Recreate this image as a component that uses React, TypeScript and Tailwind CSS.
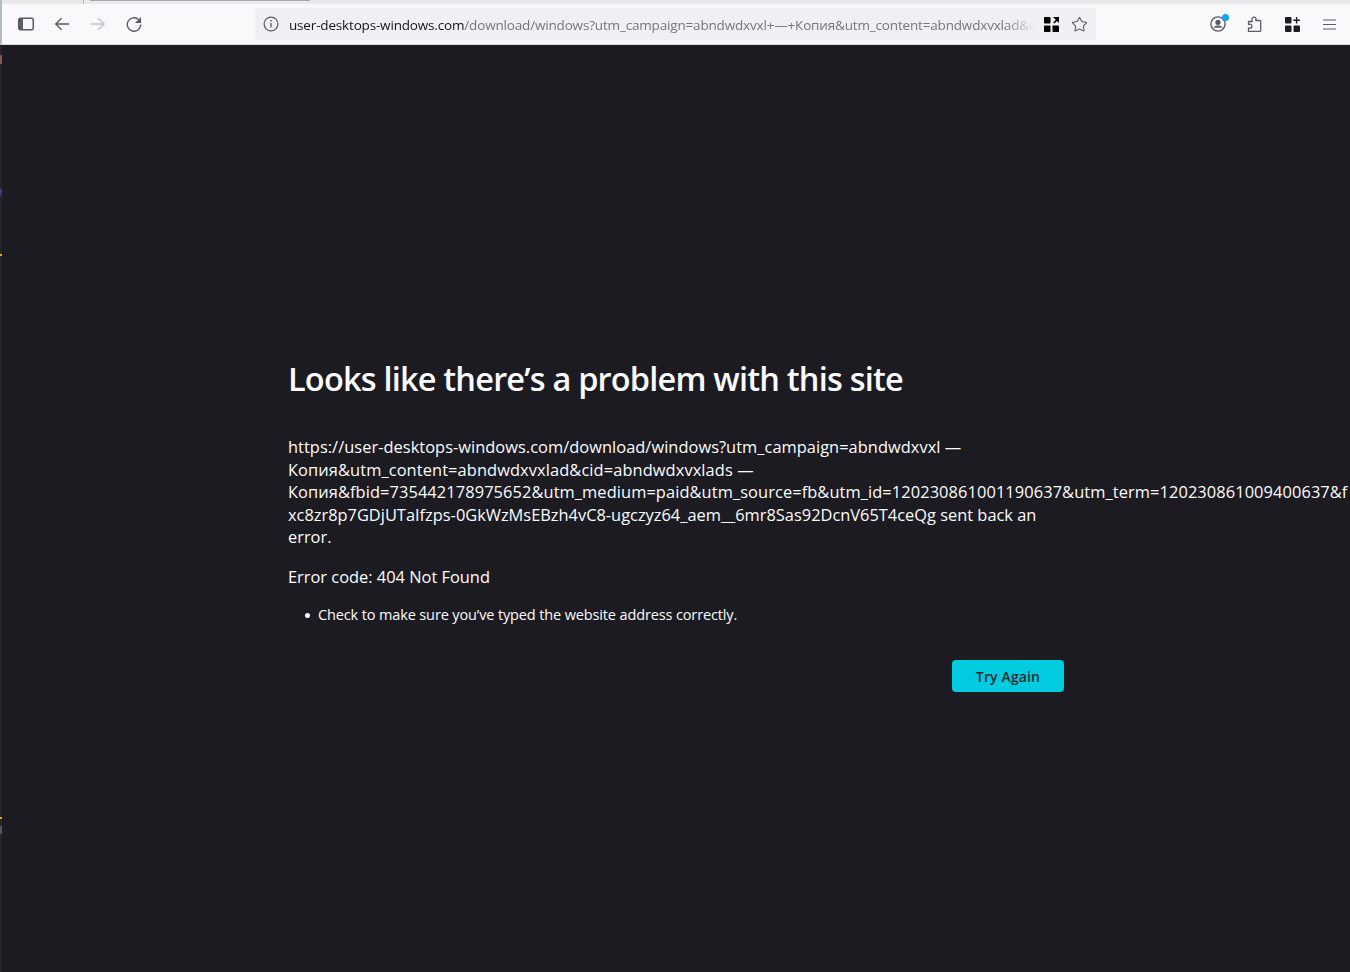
import { Star } from 'lucide-react';

const ICON = '#5b5b66';

function SidebarIcon() {
  return (
    <svg width="16" height="14" viewBox="0 0 16 14" fill="none">
      <rect x="0.75" y="1.25" width="14.5" height="11.5" rx="1.5" stroke={ICON} strokeWidth="1.5" />
      <path d="M1 2h4v10H1z" fill={ICON} />
    </svg>
  );
}

function ArrowIcon({ flip, color }: { flip?: boolean; color: string }) {
  return (
    <svg width="16" height="14" viewBox="0 0 16 14" fill="none" className={flip ? 'rotate-180' : ''}>
      <path d="M15 7H2M7.5 1.2 1.8 7l5.7 5.8" stroke={color} strokeWidth="1.4" />
    </svg>
  );
}

function ReloadIcon() {
  return (
    <svg width="16" height="16" viewBox="0 0 16 16" fill="none">
      <path d="M12.6 3.6A6.7 6.7 0 1 0 14.7 8.4" stroke={ICON} strokeWidth="1.4" />
      <path d="M15 1v6H9z" fill={ICON} />
    </svg>
  );
}

function InfoIcon() {
  return (
    <svg width="16" height="16" viewBox="0 0 16 16" fill="none">
      <circle cx="8" cy="8" r="6.9" stroke={ICON} strokeWidth="1.2" />
      <path d="M8 7v4.6" stroke={ICON} strokeWidth="1.3" />
      <circle cx="8" cy="4.8" r="0.9" fill={ICON} />
    </svg>
  );
}

// four black squares, top right one is an arrow
function AppsArrowIcon() {
  return (
    <svg width="15" height="15" viewBox="0 0 15 15" fill="#000">
      <rect x="0" y="0" width="6.5" height="6.5" rx="0.8" />
      <rect x="0" y="8.5" width="6.5" height="6.5" rx="0.8" />
      <rect x="8.5" y="8.5" width="6.5" height="6.5" rx="0.8" />
      <path d="M9 0h6v6l-2-2-2.6 2.6-1.2-1.2L11.8 2.8z" />
    </svg>
  );
}

function AccountIcon() {
  return (
    <div className="relative w-4 h-4">
      <svg width="16" height="16" viewBox="0 0 16 16" fill="none">
        <circle cx="8" cy="8" r="7.1" stroke={ICON} strokeWidth="1.4" />
        <circle cx="8" cy="6.3" r="2.6" fill={ICON} />
        <path d="M3.4 11.4c1-1.3 2.6-1.9 4.6-1.9s3.6.6 4.6 1.9L8 11.8z" fill={ICON} />
      </svg>
      <div className="absolute -top-[2px] -right-[3px] w-[7px] h-[7px] rounded-full bg-[#0da5f5]" />
    </div>
  );
}

function PuzzleIcon() {
  return (
    <svg width="15" height="16" viewBox="0 0 15 16" fill="none">
      <path
        d="M7 1.2c1.3 0 2 .9 2 1.9 0 .5-.2.9-.2 1.4h3.9c.6 0 1 .4 1 1v9c0 .5-.4.9-1 .9H1.5v-3.5c.5 0 .9.3 1.5.3 1.1 0 1.9-.9 1.9-2s-.8-2-1.9-2c-.6 0-1 .3-1.5.3V5.5h3.7c0-.5-.2-.9-.2-1.4 0-1 .7-2.9 2-2.900z"
        stroke={ICON}
        strokeWidth="1.3"
        strokeLinejoin="round"
      />
    </svg>
  );
}

function AppsPlusIcon() {
  return (
    <svg width="15" height="15" viewBox="0 0 15 15" fill="#1c1b22">
      <rect x="0" y="0" width="6.5" height="6.5" rx="1" />
      <rect x="0" y="8.5" width="6.5" height="6.5" rx="1" />
      <rect x="8.5" y="8.5" width="6.5" height="6.5" rx="1" />
      <path d="M10.9 0h1.4v2.6H15V4h-2.7v2.6h-1.4V4H8.3V2.6h2.6z" />
    </svg>
  );
}

function MenuIcon() {
  return (
    <svg width="13" height="11" viewBox="0 0 13 11" fill="none" stroke={ICON} strokeWidth="1.1">
      <path d="M0 1h13M0 5.5h13M0 10h13" />
    </svg>
  );
}

function Toolbar() {
  return (
    <div className="h-[45px] shrink-0 flex flex-col bg-[#f9f9fb] border-b border-[#d8d8dc]">
      <div className="h-[4px] shrink-0 bg-[#e9e9ec] flex">
        <div className="w-[84px] border-r border-[#b8b8bc]" />
        <div className="ml-[6px] w-[220px] h-[1px] bg-[#a8a8ac]" />
      </div>
      <div className="flex-1 flex items-center">
        <div className="w-[255px] shrink-0 flex items-center">
          <div className="ml-[18px] flex"><SidebarIcon /></div>
          <div className="ml-[20px] flex"><ArrowIcon color={ICON} /></div>
          <div className="ml-[20px] flex"><ArrowIcon flip color="#c2c2c8" /></div>
          <div className="ml-[20px] flex"><ReloadIcon /></div>
        </div>
        <div className="w-[841px] h-[32px] shrink-0 rounded-[4px] bg-[#f0f0f4] flex items-center pl-[8px] pr-[8px]">
          <InfoIcon />
          <div className="relative top-[1px] ml-[10px] w-[746px] whitespace-nowrap text-[13.5px] text-[#15141a] tracking-[-0.17px] [mask-image:linear-gradient(to_right,#000_96%,transparent_100%)]">
            user-desktops-windows.com
            <span className="text-[#75757c]">/download/windows?utm_campaign=abndwdxvxl+—+Копия&amp;utm_content=abndwdxvxlad&amp;c</span>
          </div>
          <div className="ml-[9px] flex"><AppsArrowIcon /></div>
          <div className="ml-[12px] flex text-[#5b5b66]"><Star size={17} strokeWidth={1.5} /></div>
        </div>
        <div className="ml-[114px] flex items-center gap-[21px]">
          <AccountIcon />
          <PuzzleIcon />
          <div className="ml-[2px] flex"><AppsPlusIcon /></div>
          <div className="ml-[2px] flex"><MenuIcon /></div>
        </div>
      </div>
    </div>
  );
}

// sliver of another window showing along the left edge
function LeftEdge() {
  return (
    <div className="absolute left-0 top-0 w-[2px] h-[972px] bg-[#26262a]">
      <div className="absolute top-0 left-0 w-[2px] h-[45px] bg-[#b4bcc0]" />
      <div className="absolute top-[55px] left-0 w-[2px] h-[9px] bg-[#8a5555]" />
      <div className="absolute top-[189px] left-0 w-[2px] h-[4px] bg-[#5a2f8a]" />
      <div className="absolute top-[193px] left-0 w-[2px] h-[3px] bg-[#24408a]" />
      <div className="absolute top-[254px] left-0 w-[2px] h-[2px] bg-[#d8b020]" />
      <div className="absolute top-[817px] left-0 w-[2px] h-[2px] bg-[#d8b020]" />
      <div className="absolute top-[826px] left-0 w-[2px] h-[8px] bg-[#55555a]" />
    </div>
  );
}

export default function App() {
  return (
    <div className="relative w-[1350px] h-[972px] overflow-hidden flex flex-col bg-[#1c1b22] font-['Open_Sans','Noto_Sans',sans-serif] text-[#fbfbfe]">
      <Toolbar />
      <LeftEdge />
      <main className="flex-1 pl-[288px] pt-[311px]">
        <h1 className="text-[32.5px] leading-[46px] font-semibold tracking-[-0.8px] whitespace-nowrap">
          Looks like there’s a problem with this site
        </h1>
        <div className="mt-[34px] text-[16.4px] leading-[22.5px] whitespace-nowrap">
          <p className="tracking-[0.04px]">https://user-desktops-windows.com/download/windows?utm_campaign=abndwdxvxl —</p>
          <p className="tracking-[0.1px]">Копия&amp;utm_content=abndwdxvxlad&amp;cid=abndwdxvxlads —</p>
          <p className="tracking-[0.09px]">Копия&amp;fbid=735442178975652&amp;utm_medium=paid&amp;utm_source=fb&amp;utm_id=120230861001190637&amp;utm_term=120230861009400637&amp;f</p>
          <p>xc8zr8p7GDjUTaIfzps-0GkWzMsEBzh4vC8-ugczyz64_aem__6mr8Sas92DcnV65T4ceQg sent back an</p>
          <p>error.</p>
        </div>
        <p className="mt-[17px] text-[16.4px] leading-[22.5px]">Error code: 404 Not Found</p>
        <ul className="mt-[17px] text-[14.5px] leading-[20px] tracking-[-0.13px]">
          <li className="flex items-center">
            <span className="ml-[17px] w-[5px] h-[5px] rounded-full bg-[#fbfbfe]" />
            <span className="ml-[8px]">Check to make sure you’ve typed the website address correctly.</span>
          </li>
        </ul>
        <div className="mt-[35px] w-[776px] flex justify-end">
          <button className="w-[112px] h-[32px] rounded-[4px] bg-[#00cbdf] text-[#2b2a33] text-[14px] font-semibold tracking-[0.14px]">
            Try Again
          </button>
        </div>
      </main>
    </div>
  );
}
